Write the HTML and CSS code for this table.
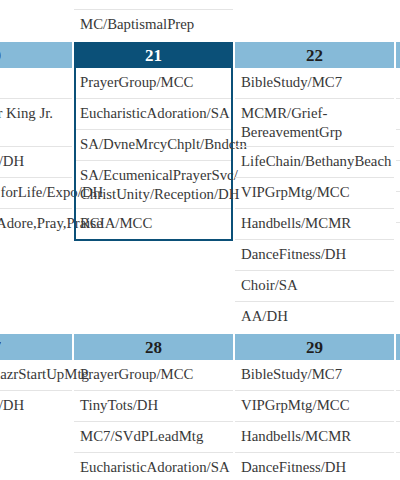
FILE: index.html
```html
<!DOCTYPE html>
<html lang="en">
<head>
<meta charset="utf-8">
<title>Parish Calendar</title>
<link rel="stylesheet" href="styles.css">
</head>
<body>
<div class="cal">
  <div class="week week-prev">
    <div class="day"></div>
    <div class="day">
      <ul class="events">
        <li class="event">Choir/SA</li>
        <li class="event">MC/BaptismalPrep</li>
      </ul>
    </div>
    <div class="day"></div>
    <div class="day"></div>
  </div>

  <div class="week">
    <div class="day">
      <div class="date">20</div>
      <ul class="events">
        <li class="event">Holiday</li>
        <li class="event">Martin Luther King Jr.<br>Day</li>
        <li class="event">DanceFitness/DH</li>
        <li class="event">Youth March forLife/Expo/DH</li>
        <li class="event">Youth Night/Adore,Pray,Praise</li>
      </ul>
    </div>
    <div class="day today">
      <div class="date">21</div>
      <ul class="events">
        <li class="event">PrayerGroup/MCC</li>
        <li class="event">EucharisticAdoration/SA</li>
        <li class="event">SA/DvneMrcyChplt/Bndctn</li>
        <li class="event">SA/EcumenicalPrayerSvc/<br>ChristUnity/Reception/DH</li>
        <li class="event">RCIA/MCC</li>
      </ul>
    </div>
    <div class="day">
      <div class="date">22</div>
      <ul class="events">
        <li class="event">BibleStudy/MC7</li>
        <li class="event">MCMR/Grief-<br>BereavementGrp</li>
        <li class="event">LifeChain/BethanyBeach</li>
        <li class="event">VIPGrpMtg/MCC</li>
        <li class="event">Handbells/MCMR</li>
        <li class="event">DanceFitness/DH</li>
        <li class="event">Choir/SA</li>
        <li class="event">AA/DH</li>
      </ul>
    </div>
    <div class="day">
      <div class="date">23</div>
      <ul class="events">
        <li class="event">TinyTots/DH</li>
        <li class="event">Scouts/DH</li>
        <li class="event">RCIA/MCC</li>
        <li class="event">Choir/SA</li>
        <li class="event">Handbells/MCMR</li>
        <li class="event">AA/DH</li>
      </ul>
    </div>
  </div>

  <div class="week">
    <div class="day">
      <div class="date">27</div>
      <ul class="events">
        <li class="event">Youth TrailBlazrStartUpMtg</li>
        <li class="event">DanceFitness/DH</li>
      </ul>
    </div>
    <div class="day">
      <div class="date">28</div>
      <ul class="events">
        <li class="event">PrayerGroup/MCC</li>
        <li class="event">TinyTots/DH</li>
        <li class="event">MC7/SVdPLeadMtg</li>
        <li class="event">EucharisticAdoration/SA</li>
        <li class="event">RCIA/MCC</li>
      </ul>
    </div>
    <div class="day">
      <div class="date">29</div>
      <ul class="events">
        <li class="event">BibleStudy/MC7</li>
        <li class="event">VIPGrpMtg/MCC</li>
        <li class="event">Handbells/MCMR</li>
        <li class="event">DanceFitness/DH</li>
        <li class="event">Choir/SA</li>
      </ul>
    </div>
    <div class="day">
      <div class="date">30</div>
      <ul class="events">
        <li class="event">TinyTots/DH</li>
        <li class="event">Scouts/DH</li>
        <li class="event">RCIA/MCC</li>
        <li class="event">Choir/SA</li>
      </ul>
    </div>
  </div>
</div>
</body>
</html>
```

FILE: styles.css
```css
html, body {
  margin: 0;
  padding: 0;
  overflow: hidden;
  background: #ffffff;
}

body {
  font-family: "Liberation Serif", "DejaVu Serif", serif;
  font-size: 14.8px;
  color: #383838;
}

.cal {
  display: flex;
  flex-direction: column;
  row-gap: 2px;
  margin-left: -87px;
  margin-top: -21px;
  width: 642px;
}

.week {
  display: grid;
  grid-template-columns: repeat(4, 159px);
  column-gap: 2px;
}

.day {
  align-self: start;
  min-width: 0;
}

.date {
  height: 26px;
  line-height: 27px;
  background: #86bad8;
  color: #1e1e1e;
  text-align: center;
  font-weight: bold;
  font-size: 17px;
}

.today {
  border: 2px solid #0b5078;
}

.today .date {
  height: 24px;
  line-height: 24px;
  background: #0b5078;
  color: #ffffff;
}

.today .event {
  padding-left: 4px;
}

.events {
  list-style: none;
  margin: 0;
  padding: 0;
}

.event {
  box-sizing: border-box;
  min-height: 31px;
  padding: 5px 6px 4px;
  line-height: 19px;
  white-space: nowrap;
  border-bottom: 1px solid #e4e4e4;
}

.event:last-child {
  border-bottom: none;
  min-height: 30px;
}
```
